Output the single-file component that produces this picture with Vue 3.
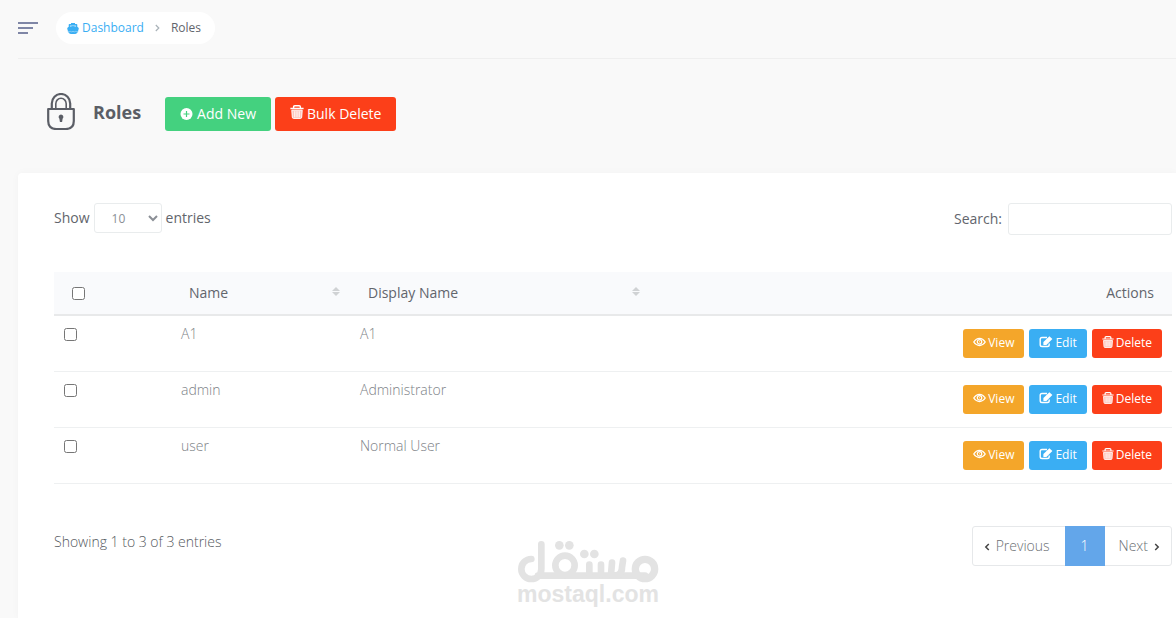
<script setup>
import { ref } from 'vue'

const rows = ref([
  { id: 1, name: 'A1', display: 'A1', checked: false },
  { id: 2, name: 'admin', display: 'Administrator', checked: false },
  { id: 3, name: 'user', display: 'Normal User', checked: false },
])
const all = ref(false)
const search = ref('')
const pageSize = ref(10)
const toggleAll = () => rows.value.forEach((r) => { r.checked = all.value })
</script>

<template>
  <div class="page">
    <svg class="defs" width="0" height="0" aria-hidden="true">
      <symbol id="i-trash" viewBox="0 0 14 14">
        <path d="M.4 3.500h13.200M3.600 3.200V2q0-1.200 1.200-1.200h4.400q1.200 0 1.200 1.200v1.200" fill="none" stroke="currentColor" stroke-width="1.400" />
        <path d="M1.800 5.200h10.400l-.5 7q-.1 1.200-1.200 1.200h-7q-1.100 0-1.200-1.200z" fill="currentColor" fill-opacity=".7" stroke="currentColor" stroke-width="1" />
        <path d="M4.800 6.200v6M7 6.200v6M9.200 6.200v6" stroke="currentColor" stroke-width="1" />
      </symbol>
      <symbol id="i-eye" viewBox="0 0 14 10">
        <path d="M.8 5Q3.400 1.200 7 1.200T13.200 5Q10.600 8.800 7 8.800T.8 5z" fill="none" stroke="currentColor" stroke-width="1.400" />
        <circle cx="7" cy="4.800" r="2.400" fill="none" stroke="currentColor" stroke-width="1.300" />
        <circle cx="7" cy="4.800" r=".6" fill="currentColor" />
      </symbol>
      <symbol id="i-edit" viewBox="0 0 14 12">
        <path d="M8 1.500H3Q1.200 1.500 1.200 3.300v5.400q0 1.800 1.800 1.800h5.400q1.800 0 1.800-1.800V7.600" fill="none" stroke="currentColor" stroke-width="1.400" />
        <path d="M4.400 6 10.400.2l3 2.800-6 5.900H4.400z" fill="currentColor" />
      </symbol>
    </svg>

    <header class="topbar">
      <button class="menu" aria-label="Toggle menu">
        <svg width="20" height="14" viewBox="0 0 20 14">
          <path d="M0 2h20M0 7h15M0 12h10" stroke="#7f86a6" stroke-width="2" />
        </svg>
      </button>
      <nav class="crumbs" aria-label="Breadcrumb">
        <a href="#" class="crumb-link">
          <svg width="12" height="11" viewBox="0 0 12 11">
            <path d="M4 0h4v1h1.500q.8 0 .8.800v2l1.500 1.200q-.2 2-1 3.600-.3 2-1.800 2.200-1.500.4-3 .2-1.500.2-3-.2-1.500-.2-1.800-2.200Q.4 7 .2 5l1.500-1.200v-2q0-.8.800-.8H4z" fill="#3aaef3" />
            <path d="M3 3.700V2.400h6v1.300L6 2.900z" fill="#c5e8fb" />
            <path d="M.6 8.600q1.400.6 2.700-.2 1.300.8 2.700 0 1.400.8 2.700 0 1.300.8 2.700.2" fill="none" stroke="#a5dbf9" stroke-width=".7" />
          </svg>
          Dashboard</a>
        <svg class="sep" width="5" height="8" viewBox="0 0 5 8"><path d="M.8 1l3 3-3 3" fill="none" stroke="#a9b2b8" stroke-width="1.200" /></svg>
        <span>Roles</span>
      </nav>
    </header>

    <div class="heading">
      <svg class="lock" width="28" height="37" viewBox="0 0 28 37" fill="none" stroke="#5b5e66">
        <path d="M1.200 16h25.600v12q0 8-8 8H9.200q-8 0-8-8z" stroke-width="2.200" stroke-linejoin="round" />
        <path d="M4.800 16v-5.500a9.200 9.500 0 0 1 18.400 0V16" stroke-width="2.200" />
        <path d="M8.800 16v-5.200a5.200 5.500 0 0 1 10.400 0V16" stroke-width="1.600" />
        <path d="M14 21.500a2.500 2.500 0 0 1 1.600 4.300l-.5 3.200h-2.200l-.5-3.200A2.500 2.500 0 0 1 14 21.500z" fill="#5b5e66" stroke="none" />
      </svg>
      <h1>Roles</h1>
      <div class="tools">
        <button class="btn green">
          <svg width="13" height="12" viewBox="0 0 12 12"><circle cx="6" cy="6" r="6" fill="#fff" /><path d="M3 6h6M6 3v6" stroke="#44d17f" stroke-width="1.200" /></svg>
          Add New</button>
        <button class="btn red"><svg class="raised" width="14" height="14"><use href="#i-trash" /></svg>Bulk Delete</button>
      </div>
    </div>

    <main class="card">
      <div class="filters">
        <label class="show">Show
          <select v-model="pageSize"><option :value="10">10</option><option :value="25">25</option></select>
          entries</label>
        <label class="search">Search: <input v-model="search" type="search" /></label>
      </div>

      <table>
        <colgroup><col class="c-check" /><col class="c-name" /><col class="c-display" /><col /></colgroup>
        <thead>
          <tr>
            <th><input v-model="all" type="checkbox" aria-label="Select all" @change="toggleAll" /></th>
            <th v-for="h in ['Name', 'Display Name']" :key="h">
              <span class="sort">{{ h }}
                <svg class="raised" width="8" height="9" viewBox="0 0 8 9"><path d="M4 0l4 4H0zM4 9l4-4H0z" fill="#d0d2d4" /></svg>
              </span>
            </th>
            <th class="right">Actions</th>
          </tr>
        </thead>
        <tbody>
          <tr v-for="r in rows" :key="r.id">
            <td><input v-model="r.checked" type="checkbox" :aria-label="'Select ' + r.name" /></td>
            <td>{{ r.name }}</td>
            <td>{{ r.display }}</td>
            <td>
              <div class="actions">
                <button class="btn small amber"><svg class="raised" width="13" height="10"><use href="#i-eye" /></svg>View</button>
                <button class="btn small blue"><svg class="raised" width="14" height="12"><use href="#i-edit" /></svg>Edit</button>
                <button class="btn small red"><svg class="raised" width="12" height="12"><use href="#i-trash" /></svg>Delete</button>
              </div>
            </td>
          </tr>
        </tbody>
      </table>

      <div class="foot">
        <span class="info">Showing 1 to 3 of 3 entries</span>
        <nav class="pager" aria-label="Pages">
          <button><svg width="6" height="8" viewBox="0 0 6 8"><path d="M4.800 1l-3 3 3 3" /></svg>Previous</button>
          <button class="current" aria-current="page">1</button>
          <button>Next<svg width="6" height="8" viewBox="0 0 6 8"><path d="M1.200 1l3 3-3 3" /></svg></button>
        </nav>
      </div>
    </main>

    <div class="mark">
      <svg width="142" height="43" viewBox="50 30 426 129" fill="none" stroke="#e3e3e3" stroke-width="20" stroke-linecap="round" role="img" aria-label="mostaql">
        <path d="M93 87a30 30 0 1 0 30 30V43M113 137H434" />
        <circle cx="194" cy="106" r="29" />
        <circle cx="434" cy="117" r="29" stroke-width="22" />
        <path d="M267 104v30M302 104v30M335 98l-3 36M368 92l-3 20q0 24-20 24" />
        <g fill="#e3e3e3" stroke="none"><circle cx="177" cy="46" r="13" /><circle cx="207" cy="46" r="13" /><circle cx="252" cy="72" r="13" /><circle cx="282" cy="72" r="13" /></g>
      </svg>
      <span>mostaql.com</span>
    </div>
  </div>
</template>

<style>
body { background: #f9f9f9; overflow: hidden; }
</style>

<style scoped>
.page { min-height: 100vh; box-sizing: border-box; padding-left: 18px; display: flex; flex-direction: column; position: relative; font: 14px/20px "Open Sans", sans-serif; color: #62656c; }
.page * { box-sizing: border-box; }
.defs { position: absolute; }
button { font: inherit; color: inherit; border: 0; background: none; padding: 0; margin: 0; cursor: pointer; }
.topbar { height: 59px; display: flex; align-items: center; gap: 18px; border-bottom: 1px solid #efefef; padding-bottom: 2px; }
.menu { display: flex; }
.crumbs { height: 32px; padding: 0 14px 0 11px; border-radius: 16px; background: #fff; display: flex; align-items: center; gap: 11px; font-size: 12px; }
.crumb-link { color: #3aaef3; text-decoration: none; display: flex; align-items: center; gap: 3px; }
.heading { height: 114px; display: flex; align-items: center; padding: 0 0 8px 29px; }
h1 { margin: 0 24px 0 18px; font-size: 18px; line-height: 24px; font-weight: 700; color: #5b5e66; }
.lock { margin-bottom: 2px; }
.tools { display: flex; gap: 4px; padding-top: 4px; }
.btn { display: inline-flex; align-items: center; justify-content: center; gap: 4px; height: 34px; padding: 0 15px; border-radius: 3px; color: #fff; }
.raised { margin-bottom: 4px; }
.tools .red { gap: 3px; }
.green { background: #44d17f; }
.red { background: #fc3f19; }
.amber { background: #f4a62a; }
.blue { background: #3aaef3; }
.small { height: 29px; padding: 0 10px 2px; font-size: 12px; gap: 2px; font-weight: 500; }
.small .raised { margin-bottom: 2px; }
.card { flex: 1; background: #fff; border-radius: 4px 0 0 0; box-shadow: 0 0 8px rgba(0, 0, 0, 0.03); padding: 30px 4px 0 36px; }
.filters { display: flex; justify-content: space-between; align-items: center; height: 32px; }
.show, .search { display: flex; align-items: center; gap: 4px; }
.show { height: 30px; margin-bottom: 2px; }
.search { gap: 6px; }
select { width: 68px; height: 30px; border: 1px solid #e9eced; border-radius: 3px; background: #fff; font: 12px "Open Sans", sans-serif; color: #8b8f96; padding: 0 0 0 13px; }
.search input { width: 164px; height: 32px; border: 1px solid #e9eced; border-radius: 3px; background: #fff; font: inherit; padding: 0 8px; }
table { width: 100%; margin-top: 37px; border-collapse: separate; border-spacing: 0; table-layout: fixed; }
.c-check { width: 117px; }
.c-name { width: 179px; }
.c-display { width: 300px; }
th { height: 44px; padding: 0 18px; text-align: left; font-weight: 400; background: #f9fafc; border-bottom: 2px solid #e8e9ea; }
th:nth-child(2), th:nth-child(3) { padding-right: 10px; }
th.right { text-align: right; }
.sort { display: flex; align-items: center; justify-content: space-between; }
td { height: 56px; padding: 8px 10px; vertical-align: top; border-bottom: 1px solid #eef0f1; color: #7d8287; font-weight: 300; }
input[type='checkbox'] { width: 13px; height: 13px; margin: 3px 0; display: block; }
td input[type='checkbox'] { margin-top: 4px; }
.actions { display: flex; justify-content: flex-end; gap: 5px; padding-top: 5px; }
.foot { display: flex; justify-content: space-between; align-items: flex-start; padding-top: 42px; }
.info { padding-top: 6px; color: #55595e; font-weight: 300; }
.pager { display: flex; height: 40px; border: 1px solid #e6e8ea; border-radius: 3px; color: #6c7074; font-weight: 300; }
.pager button { padding: 0 11px; display: flex; align-items: center; gap: 6px; }
.pager button:first-child { padding-right: 15px; }
.pager button:last-child { padding-left: 14px; }
.pager svg { margin-top: 1px; }
.pager svg path { fill: none; stroke: #444; stroke-width: 1.5; }
.pager .current { width: 40px; padding: 0; margin: -1px 0; justify-content: center; background: #63a6ea; color: #fff; }
.mark { position: absolute; left: 50%; bottom: 13px; transform: translateX(-50%); display: flex; flex-direction: column; align-items: center; color: #e3e3e3; font: 700 23px/22px "Liberation Sans", sans-serif; }
</style>
